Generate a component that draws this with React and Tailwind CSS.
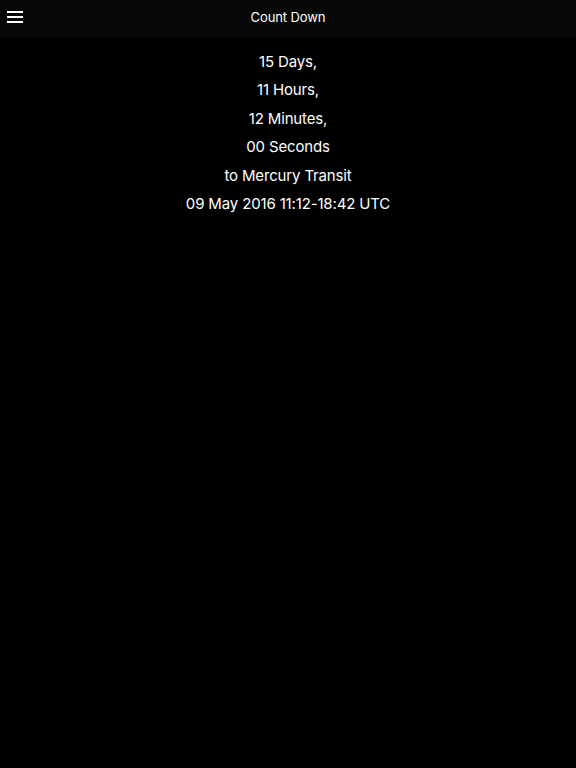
import React from 'react'

const lines = [
  '15 Days,',
  '11 Hours,',
  '12 Minutes,',
  '00 Seconds',
  'to Mercury Transit',
  '09 May 2016 11:12-18:42 UTC'
]

export default function App() {
  return (
    <div className="min-h-screen w-full bg-black text-white font-['Inter',sans-serif]">
      {/* Nav bar */}
      <header className="relative flex h-[37px] items-center justify-center bg-[#070707] pb-[2px]">
        <button className="absolute left-[7px] top-[11px] flex flex-col gap-[3px]">
          <span className="block h-[2px] w-[16px] bg-white" />
          <span className="block h-[2px] w-[16px] bg-white" />
          <span className="block h-[2px] w-[16px] bg-white" />
        </button>
        <h1 className="text-[13px] tracking-[-0.1px]">Count Down</h1>
      </header>

      {/* Countdown */}
      <main className="flex flex-col items-center pt-[11px]">
        {lines.map((line) => (
          <p key={line} className="h-[28.4px] text-[15px] leading-[28.4px] tracking-[-0.15px]">
            {line}
          </p>
        ))}
      </main>
    </div>
  )
}
